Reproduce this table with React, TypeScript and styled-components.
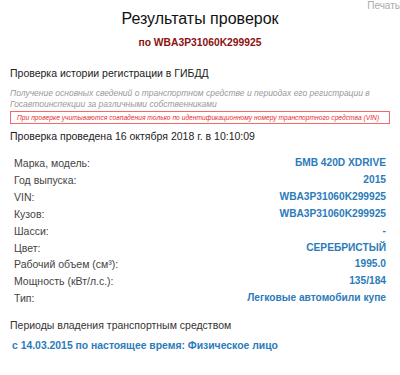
import styled, { createGlobalStyle } from 'styled-components'

const GlobalStyle = createGlobalStyle`
  html, body {
    margin: 0;
    padding: 0;
    background: #fff;
    font-family: "Liberation Sans", Arial, sans-serif;
  }
`

const Page = styled.div`
  width: 400px;
  padding: 0 10px;
  box-sizing: border-box;
`

const Header = styled.div`
  position: relative;
  display: flex;
  flex-direction: column;
  align-items: center;
  padding-top: 9px;
`

const PrintLink = styled.a`
  position: absolute;
  top: 0;
  right: -10px;
  font-size: 10px;
  line-height: 12px;
  color: #aaa;
  text-decoration: none;
`

const Title = styled.h1`
  margin: 0;
  font-size: 16px;
  font-weight: normal;
  color: #111;
  line-height: 20px;
`

const Subtitle = styled.div`
  margin-top: 7px;
  font-size: 10.3px;
  line-height: 14px;
  font-weight: bold;
  color: #8b1111;
`

const Section = styled.div`
  margin-top: 16px;
`

const SectionTitle = styled.div`
  font-size: 10.5px;
  color: #222;
  line-height: 14px;
`

const Note = styled.div`
  margin-top: 8px;
  font-size: 8.5px;
  font-style: italic;
  color: #999;
  line-height: 11px;
`

const Warning = styled.div`
  margin-top: 1px;
  border: 1px solid #f06a6a;
  padding: 0 6px;
  font-size: 6.7px;
  font-style: italic;
  color: #e52b2b;
  line-height: 11px;
  white-space: nowrap;
`

const CheckedAt = styled.div`
  margin-top: 5px;
  font-size: 10.5px;
  line-height: 14px;
  color: #222;
`

const Table = styled.div`
  margin: 12px 4px 0 4px;
  display: flex;
  flex-direction: column;
`

const Row = styled.div`
  display: flex;
  justify-content: space-between;
  font-size: 10.5px;
  line-height: 16.9px;
`

const Label = styled.span`
  color: #444;
`

const Value = styled.span`
  font-size: 10.2px;
  font-weight: bold;
  color: #2b7bba;
`

const Owners = styled.div`
  margin-top: 11px;
`

const OwnersTitle = styled.div`
  font-size: 10.5px;
  line-height: 14px;
  color: #333;
`

const OwnerItem = styled.div`
  margin: 7px 0 0 2px;
  font-size: 10.4px;
  line-height: 14px;
  font-weight: bold;
  color: #2b7bba;
`

const rows: [string, string][] = [
  ['Марка, модель:', 'БМВ 420D XDRIVE'],
  ['Год выпуска:', '2015'],
  ['VIN:', 'WBA3P31060K299925'],
  ['Кузов:', 'WBA3P31060K299925'],
  ['Шасси:', '-'],
  ['Цвет:', 'СЕРЕБРИСТЫЙ'],
  ['Рабочий объем (см³):', '1995.0'],
  ['Мощность (кВт/л.с.):', '135/184'],
  ['Тип:', 'Легковые автомобили купе'],
]

export default function App() {
  return (
    <Page>
      <GlobalStyle />
      <Header>
        <PrintLink href="#">Печать</PrintLink>
        <Title>Результаты проверок</Title>
        <Subtitle>по WBA3P31060K299925</Subtitle>
      </Header>
      <Section>
        <SectionTitle>Проверка истории регистрации в ГИБДД</SectionTitle>
        <Note>
          Получение основных сведений о транспортном средстве и периодах его регистрации в
          Госавтоинспекции за различными собственниками
        </Note>
        <Warning>
          При проверке учитываются совпадения только по идентификационному номеру транспортного средства (VIN)
        </Warning>
        <CheckedAt>Проверка проведена 16 октября 2018 г. в 10:10:09</CheckedAt>
        <Table>
          {rows.map(([label, value]) => (
            <Row key={label}>
              <Label>{label}</Label>
              <Value>{value}</Value>
            </Row>
          ))}
        </Table>
        <Owners>
          <OwnersTitle>Периоды владения транспортным средством</OwnersTitle>
          <OwnerItem>с 14.03.2015 по настоящее время: Физическое лицо</OwnerItem>
        </Owners>
      </Section>
    </Page>
  )
}
